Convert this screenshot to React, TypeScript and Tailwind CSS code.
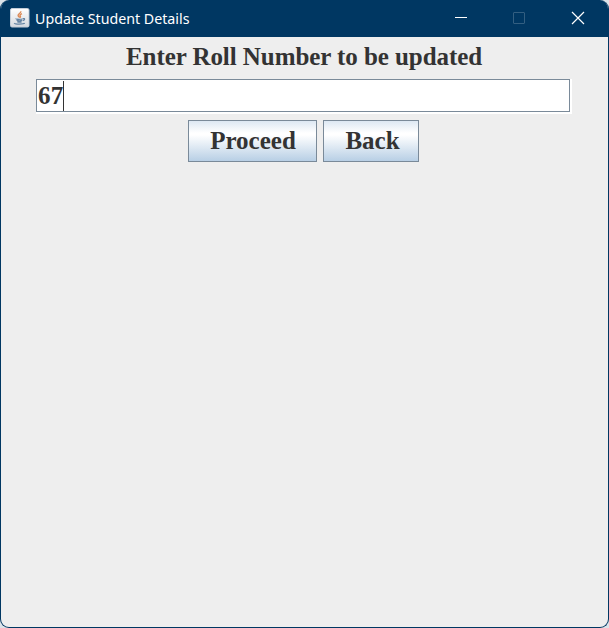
function JavaIcon() {
  return (
    <svg className="h-5 w-5 shrink-0" viewBox="0 0 20 20" fill="none">
      <defs>
        <linearGradient id="tile" x1="0" y1="0" x2="0" y2="1">
          <stop offset="0" stopColor="#fff" />
          <stop offset="1" stopColor="#d4d9df" />
        </linearGradient>
      </defs>
      <rect x="0.5" y="0.5" width="18.5" height="18.5" rx="1.5" fill="url(#tile)" stroke="#c3cdd8" />
      <path d="M10.8 3.200c.6 2-3.200 2.600-2.700 4.300.2.900 1.200 1.300 1.500 2.300M12 5.700c-1.600.7-2.500 1.400-1.800 2.300.5.700.4 1.200-.1 1.700" stroke="#dc8b58" strokeWidth="1.400" />
      <path d="M6.300 10.600c-1.200.9 6 .9 6.300 0M6.600 12.200c1.300.6 4.300.6 5.500 0M7.200 13.700c1.300.5 3.500.5 4.500 0M12.900 10.600c2.400-.5 2.100 1.700-.1 2.100M4.500 15c-.6 1.400 9.500 1.400 10.100 0" stroke="#6584a3" strokeWidth="1.300" />
    </svg>
  );
}

const buttonClass =
  "flex h-[42px] items-center justify-center border border-[#7a8a99] bg-[linear-gradient(180deg,#dde8f3_0%,#ffffff_30%,#ffffff_35%,#b8cfe5_100%)] pb-0.5 text-[25px] leading-none font-bold";

export default function App() {
  return (
    <div className="h-[628px] w-[609px] bg-[#dce3e9]">
      <div className="flex h-full flex-col overflow-hidden rounded-[9px] border border-t-0 border-[#003762] bg-[#eeeeee] text-[#333333]">
        <header className="flex h-[37px] shrink-0 items-center bg-[#003762] pl-[9px] text-white">
          <div className="flex h-full items-center gap-[5px] pb-px">
            <JavaIcon />
            <span className="font-['Noto_Sans',sans-serif] text-[15px] leading-5 whitespace-nowrap">
              <span className="inline-block w-[155px] origin-left scale-x-[0.948]">Update Student Details</span>
            </span>
          </div>
          <div className="ml-auto flex h-full">
            <button aria-label="Minimize" className="flex w-[58px] items-center justify-center pb-px">
              <svg width="14" height="14" viewBox="0 0 14 14" shapeRendering="crispEdges">
                <path d="M1 6.500h12" stroke="#fff" />
              </svg>
            </button>
            <button aria-label="Maximize" disabled className="flex w-[58px] items-center justify-center pb-px">
              <svg width="14" height="14" viewBox="0 0 14 14" fill="none">
                <rect x="1.500" y="1.500" width="11" height="11" rx="0.500" stroke="#335f81" />
              </svg>
            </button>
            <button aria-label="Close" className="flex w-[60px] items-center justify-center pb-px">
              <svg width="14" height="14" viewBox="0 0 14 14">
                <path d="M1 1l12 12M13 1L1 13" stroke="#fff" strokeWidth="1.200" />
              </svg>
            </button>
          </div>
        </header>
        <main className="flex flex-col items-center pt-[5px] pr-px font-['Liberation_Serif',serif]">
          <label className="h-[37px] text-[25px] leading-[29px] font-bold tracking-[-0.065px] whitespace-nowrap">Enter Roll Number to be updated</label>
          <div className="h-[35px] w-[536px] border-r-2 border-b-2 border-white">
            <div className="flex h-[33px] w-[534px] items-center border border-[#7a8a99] bg-white pl-px">
              <span className="text-[25px] leading-none font-bold tracking-[0.25px]">67</span>
              <span className="-ml-px h-[30px] w-px bg-[#333333]" />
            </div>
          </div>
          <div className="mt-1.5 mr-px flex gap-1.5">
            <button className={`${buttonClass} w-[129px] pl-px`}>Proceed</button>
            <button className={`${buttonClass} w-[96px] pl-[3px]`}>Back</button>
          </div>
        </main>
      </div>
    </div>
  );
}
